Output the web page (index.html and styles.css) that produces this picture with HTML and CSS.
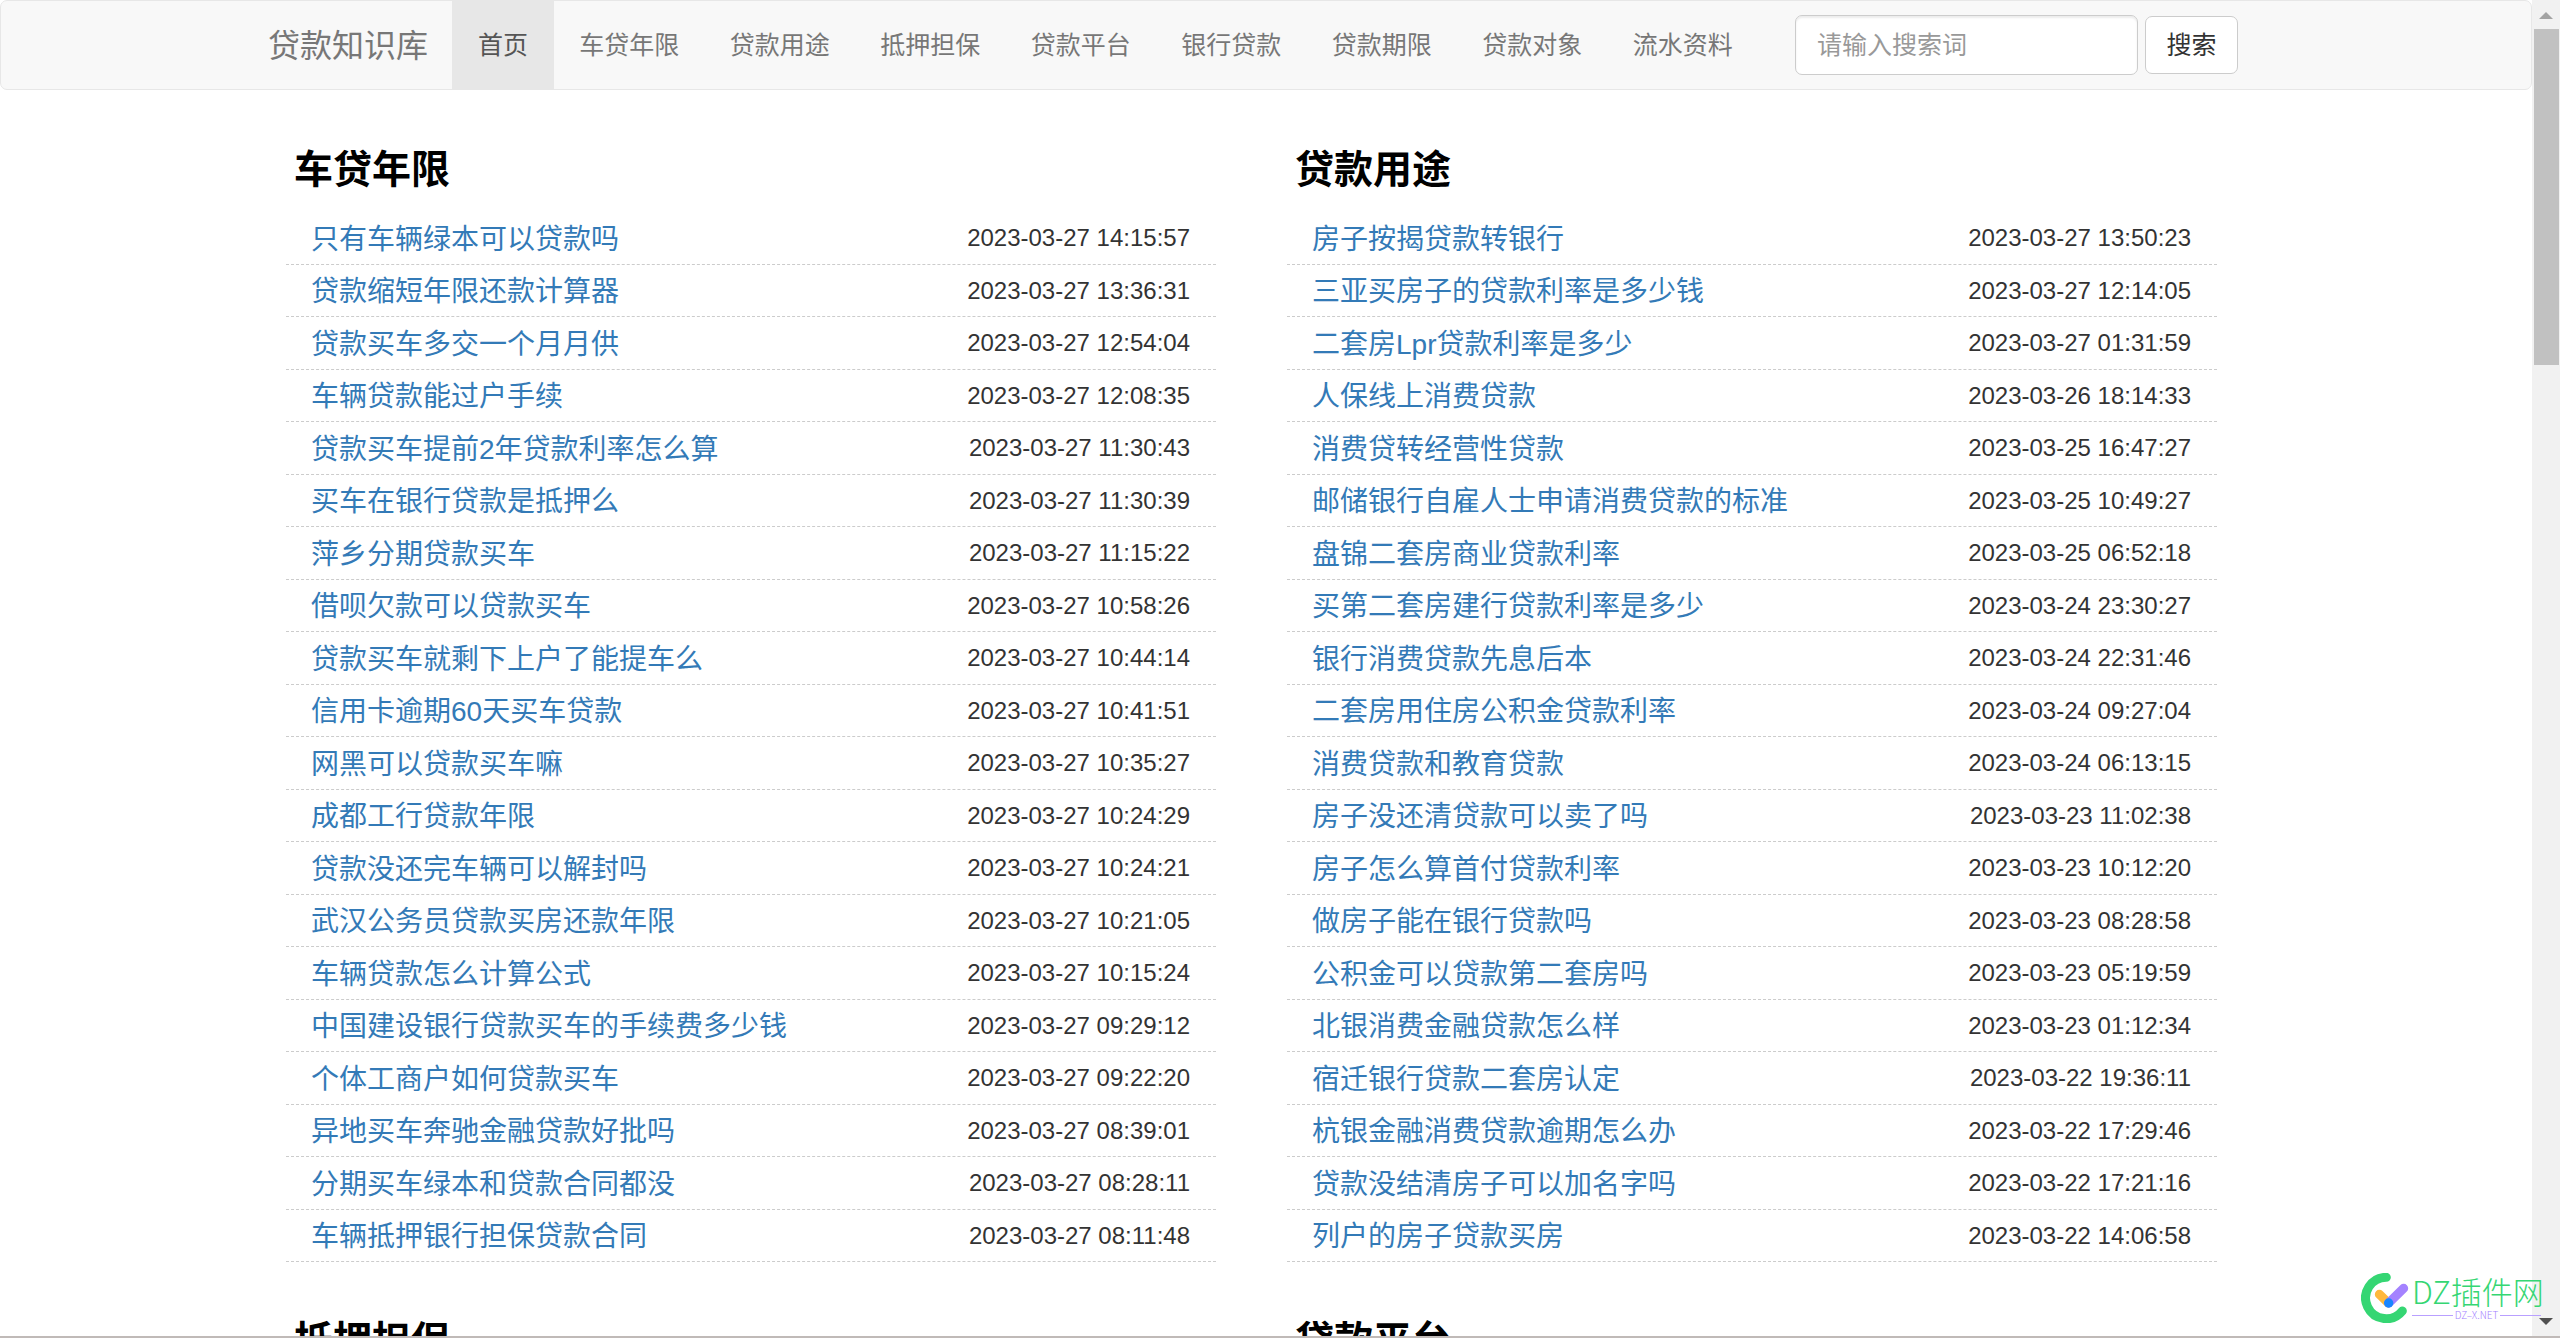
FILE: index.html
```html
<!DOCTYPE html>
<html lang="zh-CN">
<head>
<meta charset="utf-8">
<title>贷款知识库</title>
<link rel="stylesheet" href="styles.css">
</head>
<body>
<div class="window">
  <div class="page">
    <header class="navbar">
      <div class="container navbar-inner">
        <a class="brand" href="#">贷款知识库</a>
        <nav class="nav">
          <a class="nav-link home active" href="#">首页</a>
          <a class="nav-link" href="#">车贷年限</a>
          <a class="nav-link" href="#">贷款用途</a>
          <a class="nav-link" href="#">抵押担保</a>
          <a class="nav-link" href="#">贷款平台</a>
          <a class="nav-link" href="#">银行贷款</a>
          <a class="nav-link" href="#">贷款期限</a>
          <a class="nav-link" href="#">贷款对象</a>
          <a class="nav-link" href="#">流水资料</a>
        </nav>
        <form class="search">
          <input class="search-input" type="text" placeholder="请输入搜索词" aria-label="请输入搜索词">
          <button class="search-button" type="submit">搜索</button>
        </form>
      </div>
    </header>
    <main class="container board">
      <section class="panel">
        <h2 class="panel-title">车贷年限</h2>
        <ul class="list">
          <li class="row"><a href="#">只有车辆绿本可以贷款吗</a><time>2023-03-27 14:15:57</time></li>
          <li class="row"><a href="#">贷款缩短年限还款计算器</a><time>2023-03-27 13:36:31</time></li>
          <li class="row"><a href="#">贷款买车多交一个月月供</a><time>2023-03-27 12:54:04</time></li>
          <li class="row"><a href="#">车辆贷款能过户手续</a><time>2023-03-27 12:08:35</time></li>
          <li class="row"><a href="#">贷款买车提前2年贷款利率怎么算</a><time>2023-03-27 11:30:43</time></li>
          <li class="row"><a href="#">买车在银行贷款是抵押么</a><time>2023-03-27 11:30:39</time></li>
          <li class="row"><a href="#">萍乡分期贷款买车</a><time>2023-03-27 11:15:22</time></li>
          <li class="row"><a href="#">借呗欠款可以贷款买车</a><time>2023-03-27 10:58:26</time></li>
          <li class="row"><a href="#">贷款买车就剩下上户了能提车么</a><time>2023-03-27 10:44:14</time></li>
          <li class="row"><a href="#">信用卡逾期60天买车贷款</a><time>2023-03-27 10:41:51</time></li>
          <li class="row"><a href="#">网黑可以贷款买车嘛</a><time>2023-03-27 10:35:27</time></li>
          <li class="row"><a href="#">成都工行贷款年限</a><time>2023-03-27 10:24:29</time></li>
          <li class="row"><a href="#">贷款没还完车辆可以解封吗</a><time>2023-03-27 10:24:21</time></li>
          <li class="row"><a href="#">武汉公务员贷款买房还款年限</a><time>2023-03-27 10:21:05</time></li>
          <li class="row"><a href="#">车辆贷款怎么计算公式</a><time>2023-03-27 10:15:24</time></li>
          <li class="row"><a href="#">中国建设银行贷款买车的手续费多少钱</a><time>2023-03-27 09:29:12</time></li>
          <li class="row"><a href="#">个体工商户如何贷款买车</a><time>2023-03-27 09:22:20</time></li>
          <li class="row"><a href="#">异地买车奔驰金融贷款好批吗</a><time>2023-03-27 08:39:01</time></li>
          <li class="row"><a href="#">分期买车绿本和贷款合同都没</a><time>2023-03-27 08:28:11</time></li>
          <li class="row"><a href="#">车辆抵押银行担保贷款合同</a><time>2023-03-27 08:11:48</time></li>
        </ul>
      </section>
      <section class="panel">
        <h2 class="panel-title">贷款用途</h2>
        <ul class="list">
          <li class="row"><a href="#">房子按揭贷款转银行</a><time>2023-03-27 13:50:23</time></li>
          <li class="row"><a href="#">三亚买房子的贷款利率是多少钱</a><time>2023-03-27 12:14:05</time></li>
          <li class="row"><a href="#">二套房Lpr贷款利率是多少</a><time>2023-03-27 01:31:59</time></li>
          <li class="row"><a href="#">人保线上消费贷款</a><time>2023-03-26 18:14:33</time></li>
          <li class="row"><a href="#">消费贷转经营性贷款</a><time>2023-03-25 16:47:27</time></li>
          <li class="row"><a href="#">邮储银行自雇人士申请消费贷款的标准</a><time>2023-03-25 10:49:27</time></li>
          <li class="row"><a href="#">盘锦二套房商业贷款利率</a><time>2023-03-25 06:52:18</time></li>
          <li class="row"><a href="#">买第二套房建行贷款利率是多少</a><time>2023-03-24 23:30:27</time></li>
          <li class="row"><a href="#">银行消费贷款先息后本</a><time>2023-03-24 22:31:46</time></li>
          <li class="row"><a href="#">二套房用住房公积金贷款利率</a><time>2023-03-24 09:27:04</time></li>
          <li class="row"><a href="#">消费贷款和教育贷款</a><time>2023-03-24 06:13:15</time></li>
          <li class="row"><a href="#">房子没还清贷款可以卖了吗</a><time>2023-03-23 11:02:38</time></li>
          <li class="row"><a href="#">房子怎么算首付贷款利率</a><time>2023-03-23 10:12:20</time></li>
          <li class="row"><a href="#">做房子能在银行贷款吗</a><time>2023-03-23 08:28:58</time></li>
          <li class="row"><a href="#">公积金可以贷款第二套房吗</a><time>2023-03-23 05:19:59</time></li>
          <li class="row"><a href="#">北银消费金融贷款怎么样</a><time>2023-03-23 01:12:34</time></li>
          <li class="row"><a href="#">宿迁银行贷款二套房认定</a><time>2023-03-22 19:36:11</time></li>
          <li class="row"><a href="#">杭银金融消费贷款逾期怎么办</a><time>2023-03-22 17:29:46</time></li>
          <li class="row"><a href="#">贷款没结清房子可以加名字吗</a><time>2023-03-22 17:21:16</time></li>
          <li class="row"><a href="#">列户的房子贷款买房</a><time>2023-03-22 14:06:58</time></li>
        </ul>
      </section>
      <section class="panel">
        <h2 class="panel-title">抵押担保</h2>
      </section>
      <section class="panel">
        <h2 class="panel-title">贷款平台</h2>
      </section>
    </main>
  </div>
  <div class="scrollbar" aria-hidden="true">
    <svg class="arrow arrow-up" viewBox="0 0 14 7"><path d="M7 0L14 7H0Z"/></svg>
    <div class="thumb"></div>
    <svg class="arrow arrow-down" viewBox="0 0 14 7"><path d="M0 0H14L7 7Z"/></svg>
  </div>
  <div class="watermark">
    <svg class="mark" viewBox="0 0 144 150" fill="none" stroke-linecap="round" stroke-width="27">
      <path stroke="#35d673" d="M76 13A62 62 0 1 0 124 114"/>
      <path stroke="#ffb83d" d="M55 64L82 90"/>
      <path stroke="#a482ff" d="M128 46L83 90"/>
      <circle fill="#1a86ff" cx="83" cy="90" r="14"/>
    </svg>
    <div class="wordmark">
      <span class="wordmark-name">DZ插件网</span>
      <span class="wordmark-site">DZ–X.NET</span>
    </div>
  </div>
</div>
</body>
</html>
```
FILE: styles.css
```css
* {
  box-sizing: border-box;
}

body {
  margin: 0;
  background: #fff;
  color: #333;
  font-family: "Liberation Sans", "Noto Sans CJK SC", sans-serif;
  font-size: 24px;
}

a {
  color: #337ab7;
  text-decoration: none;
}

.window {
  position: relative;
  display: flex;
  height: 100vh;
  overflow: hidden;
  border-bottom: 2px solid #c0bab8;
}

.page {
  flex: 1;
  min-width: 0;
  overflow: hidden;
}

.container {
  width: 100%;
  max-width: 2048px;
  margin: 0 auto;
}

/* Top navigation */
.navbar {
  height: 90px;
  border: 1px solid #e7e7e7;
  border-radius: 7px;
  background: #f8f8f8;
  font-size: 25px;
}

.navbar-inner {
  display: flex;
  height: 100%;
  padding: 0 52px 0 26px;
}

.brand {
  display: flex;
  flex: none;
  align-items: center;
  width: 184px;
  padding-bottom: 4px;
  color: #777;
  font-size: 32px;
  white-space: nowrap;
}

.nav {
  display: flex;
  flex: none;
  width: 1306px;
}

.nav-link {
  display: flex;
  flex: 1;
  align-items: center;
  justify-content: center;
  padding-bottom: 4px;
  color: #777;
  white-space: nowrap;
}

.nav-link.home {
  flex: 0 0 102px;
}

.nav-link.active {
  background: #e7e7e7;
  color: #555;
}

.search {
  display: flex;
  flex: 1;
  align-items: center;
  gap: 7px;
  min-width: 0;
  margin-left: 37px;
}

.search-input {
  flex: 1;
  min-width: 0;
  height: 60px;
  padding: 0 21px;
  border: 1px solid #ccc;
  border-radius: 7px;
  background: #fff;
  box-shadow: inset 0 2px 2px rgba(0, 0, 0, 0.075);
  color: #555;
  font: inherit;
}

.search-input::placeholder {
  color: #999;
}

.search-button {
  flex: none;
  width: 93px;
  height: 58px;
  padding: 0 0 4px;
  border: 1px solid #ccc;
  border-radius: 7px;
  background: #fff;
  color: #333;
  font: inherit;
}

/* Article lists */
.board {
  display: grid;
  grid-template-columns: 1fr 1fr;
  gap: 50px 71px;
  padding: 51px 73px 0 44px;
}

.panel-title {
  margin: 0;
  padding: 0 8px 13px;
  color: #000;
  font-size: 39px;
  font-weight: 700;
  line-height: 58px;
}

.list {
  margin: 0;
  padding: 0;
  list-style: none;
}

.row {
  display: flex;
  align-items: center;
  justify-content: space-between;
  height: 52px;
  padding: 0 26px 0 25px;
  border-bottom: 1px dashed #ccc;
  white-space: nowrap;
}

.row:nth-child(odd) {
  height: 53px;
}

.row a {
  padding-bottom: 3px;
  font-size: 28px;
}

/* Scrollbar */
.scrollbar {
  display: flex;
  flex-direction: column;
  align-items: center;
  width: 28px;
  padding: 12px 0 11px;
  background: #f1f1f1;
}

.arrow {
  width: 14px;
  height: 7px;
}

.arrow-up {
  fill: #a3a3a3;
}

.arrow-down {
  margin-top: auto;
  fill: #505050;
}

.thumb {
  width: 25px;
  height: 336px;
  margin-top: 10px;
  background: #c1c1c1;
}

/* Site watermark over the lower right corner */
.watermark {
  position: absolute;
  right: 19px;
  bottom: 13px;
  display: flex;
  gap: 3px;
}

.mark {
  width: 48px;
  height: 50px;
}

.wordmark {
  width: 129px;
  font-family: "Noto Sans CJK SC", sans-serif;
  white-space: nowrap;
}

.wordmark-name {
  display: block;
  color: #35d673;
  font-size: 31px;
  font-weight: 300;
  line-height: 36px;
}

.wordmark-site {
  display: flex;
  align-items: center;
  gap: 2px;
  color: #a482ff;
  font-size: 10px;
  font-weight: 300;
  line-height: 12px;
}

.wordmark-site::before,
.wordmark-site::after {
  flex: 1;
  height: 1px;
  background: #b9a0ff;
  content: "";
}
```
